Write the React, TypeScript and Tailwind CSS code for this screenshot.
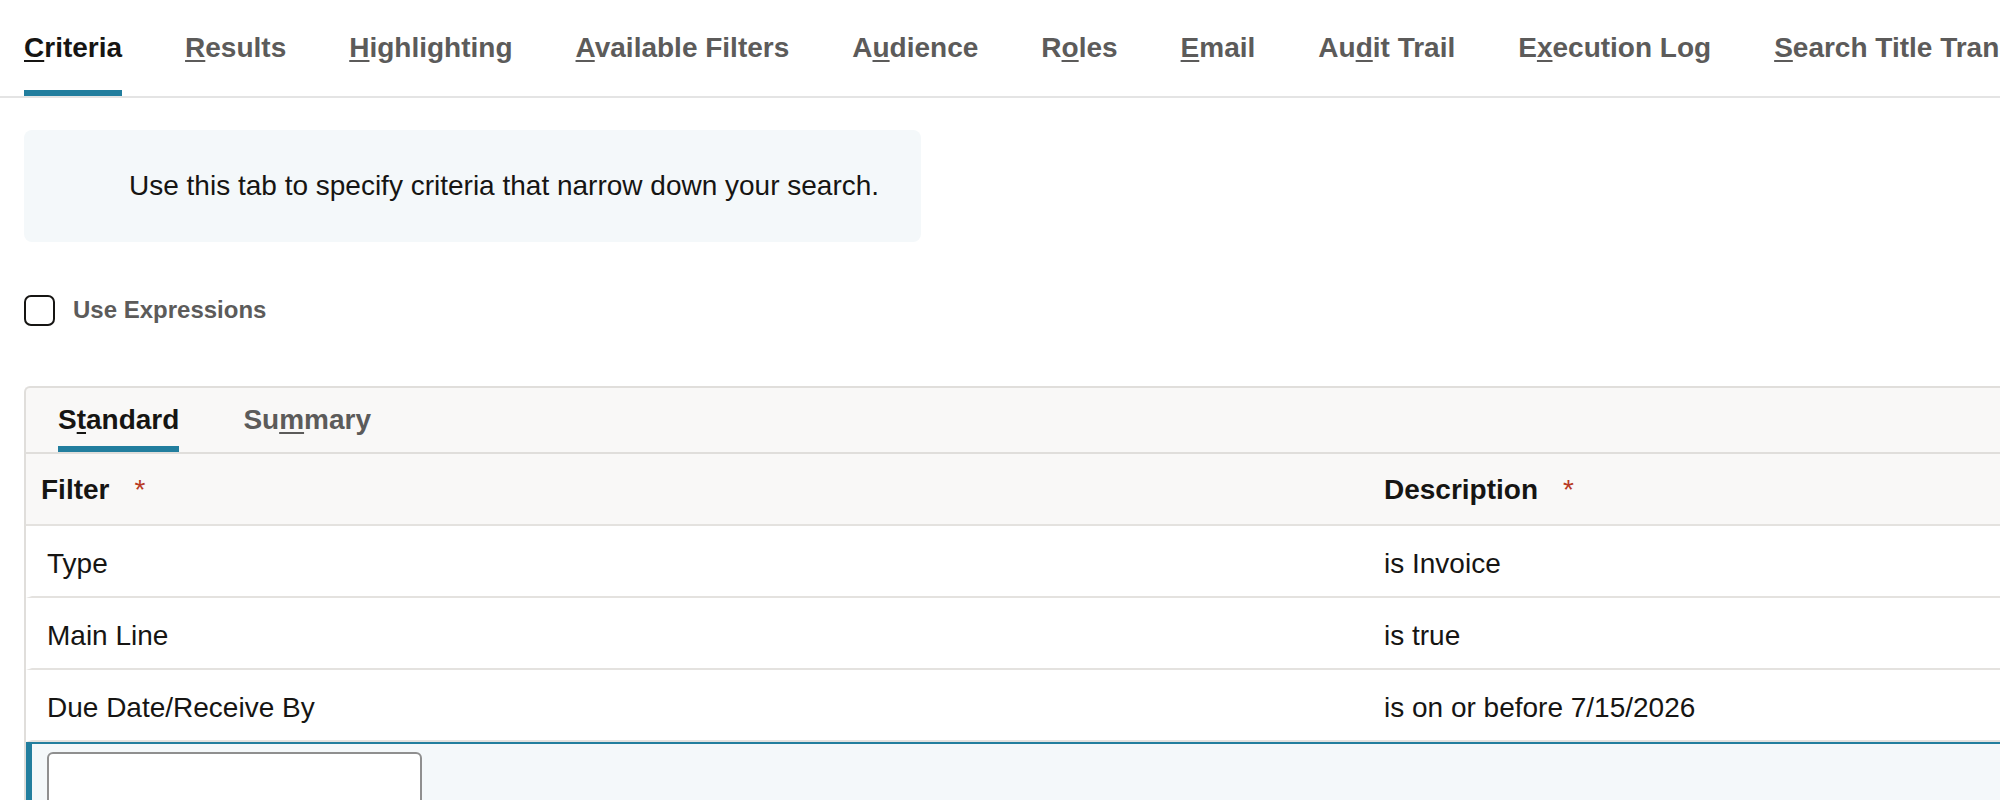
import React from "react";

const TEAL = "#227e9e";

type Tab = { pre: string; key: string; post: string };

const topTabs: Tab[] = [
  { pre: "", key: "C", post: "riteria" },
  { pre: "", key: "R", post: "esults" },
  { pre: "", key: "H", post: "ighlighting" },
  { pre: "", key: "A", post: "vailable Filters" },
  { pre: "A", key: "u", post: "dience" },
  { pre: "R", key: "o", post: "les" },
  { pre: "", key: "E", post: "mail" },
  { pre: "Au", key: "d", post: "it Trail" },
  { pre: "E", key: "x", post: "ecution Log" },
  { pre: "", key: "S", post: "earch Title Translation" },
];

const subTabs: Tab[] = [
  { pre: "S", key: "t", post: "andard" },
  { pre: "Su", key: "m", post: "mary" },
];

const rows = [
  { filter: "Type", desc: "is Invoice" },
  { filter: "Main Line", desc: "is true" },
  { filter: "Due Date/Receive By", desc: "is on or before 7/15/2026" },
];

function TabLabel({ t }: { t: Tab }) {
  return (
    <span>
      {t.pre}
      <span className="underline decoration-2 underline-offset-[3px]">{t.key}</span>
      {t.post}
    </span>
  );
}

function Required() {
  return <span className="ml-[25px] text-[28px] font-normal text-[#b83a24]">*</span>;
}

export default function App() {
  return (
    <div className="w-full overflow-hidden bg-white font-['Liberation_Sans',Arial,sans-serif] text-[#161513]">
      <div className="w-[2100px]">
        {/* main tabs */}
        <div className="flex gap-[63px] whitespace-nowrap border-b-2 border-[#e4e4e4] pl-6">
          {topTabs.map((t, i) => (
            <div
              key={i}
              className={
                "relative flex h-[96px] items-center text-[28px] font-bold " +
                (i === 0 ? "text-[#161513]" : "text-[#5c5b5a]")
              }
            >
              <TabLabel t={t} />
              {i === 0 && <div className="absolute bottom-0 left-0 h-[6px] w-full bg-[#227e9e]" />}
            </div>
          ))}
        </div>

        {/* help text */}
        <div className="ml-6 mt-8 h-[112px] w-[897px] rounded-lg bg-[#f4f8fa] pl-[105px] pt-[38px] text-[28px] leading-[36px]">
          Use this tab to specify criteria that narrow down your search.
        </div>

        {/* checkbox */}
        <label className="ml-6 mt-[50px] flex items-center gap-[18px]">
          <span className="h-[31px] w-[31px] rounded-[7px] border-2 border-[#161513] bg-white" />
          <span className="text-[24px] font-bold text-[#5c5b5a]">Use Expressions</span>
        </label>

        {/* criteria panel */}
        <div className="ml-6 mt-[58px] rounded-tl-md border-l-2 border-t-2 border-[#e0dedb] bg-[#f9f8f7]">
          <div className="flex gap-16 border-b-2 border-[#e0dedb] pl-8">
            {subTabs.map((t, i) => (
              <div
                key={i}
                className={
                  "relative flex h-[64px] items-center text-[28px] font-bold " +
                  (i === 0 ? "text-[#161513]" : "text-[#5c5b5a]")
                }
              >
                <TabLabel t={t} />
                {i === 0 && <div className="absolute bottom-0 left-0 h-[6px] w-full bg-[#227e9e]" />}
              </div>
            ))}
          </div>

          <div className="flex h-[72px] items-center border-b-2 border-[#e4e2df] pt-[2px] text-[28px] font-bold">
            <div className="flex w-[1342px] items-baseline pl-[15px]">
              Filter
              <Required />
            </div>
            <div className="flex items-baseline pl-4">
              Description
              <Required />
            </div>
          </div>

          {rows.map((r) => (
            <div
              key={r.filter}
              className="flex h-[72px] items-center border-b-2 border-l-[6px] border-b-[#e4e2df] border-l-transparent bg-white pt-[5px] text-[28px]"
            >
              <div className="w-[1336px] pl-[15px]">{r.filter}</div>
              <div className="pl-4">{r.desc}</div>
            </div>
          ))}

          <div
            className="h-[120px] border-l-[6px] border-t-2 bg-[#f4f8fa] pl-[15px] pt-2"
            style={{ borderColor: TEAL }}
          >
            <input
              className="h-[64px] w-[375px] rounded-md border-2 border-[#8f8f8f] bg-white px-3 text-[28px] outline-none"
              aria-label="Filter"
            />
          </div>
        </div>
      </div>
    </div>
  );
}
